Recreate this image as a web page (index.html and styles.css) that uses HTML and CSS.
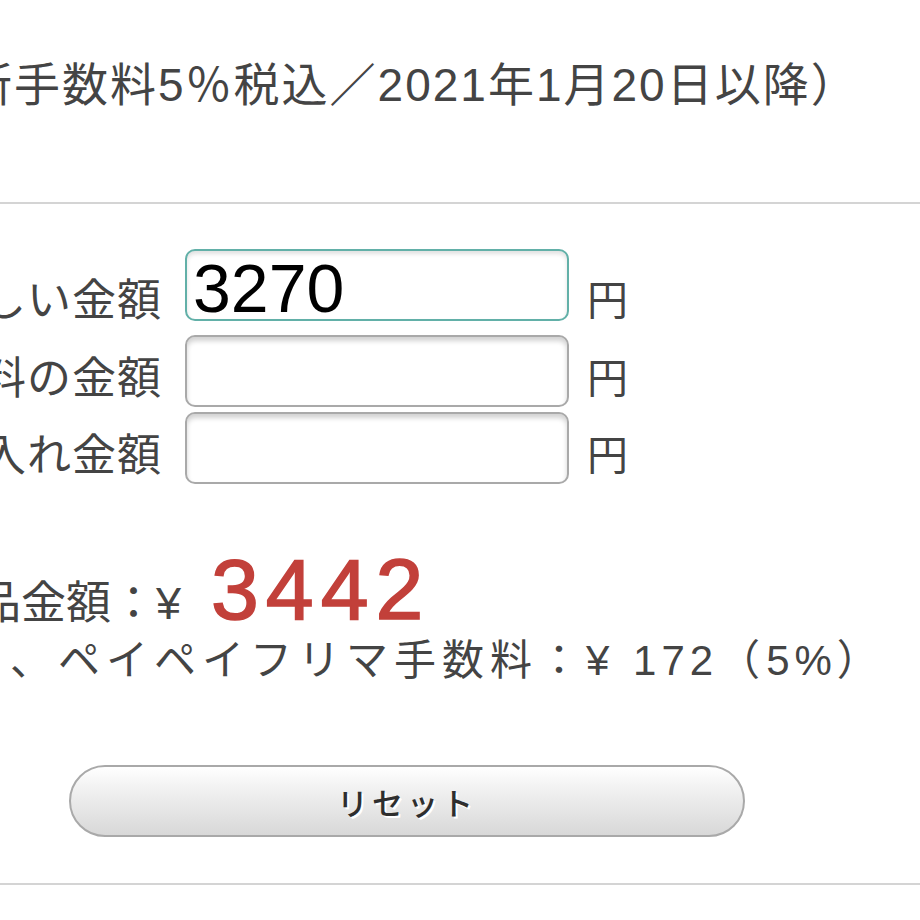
FILE: index.html
```html
<!DOCTYPE html>
<html lang="ja">
<head>
<meta charset="UTF-8">
<meta name="viewport" content="width=device-width, initial-scale=1.0">
<link rel="stylesheet" href="styles.css">
<title>出品金額計算</title>
</head>
<body>
<div class="page">
<p class="lead">（新手数料5％税込／2021年1月20日以降）</p>
<hr class="rule">
<form class="calc">
<div class="row row-first">
<label class="label" for="want"><span>欲しい金額</span></label>
<input class="field is-focus" id="want" type="text" value="3270">
<span class="unit">円</span>
</div>
<div class="row row-second">
<label class="label" for="fee"><span>手数料の金額</span></label>
<input class="field" id="fee" type="text">
<span class="unit">円</span>
</div>
<div class="row row-third">
<label class="label" for="cost"><span>仕入れ金額</span></label>
<input class="field" id="cost" type="text">
<span class="unit">円</span>
</div>
</form>
<div class="result">
<p class="price"><span class="price-label">出品金額：¥</span><span class="price-num">3442</span></p>
<p class="fee">（うち、ペイペイフリマ手数料：¥ <span class="num">172</span>（<span class="num">5%</span>）</p>
</div>
<div class="actions">
<button class="reset" type="button">リセット</button>
</div>
<hr class="rule">
</div>
</body>
</html>
```
FILE: styles.css
```css
html,
body {
margin: 0;
height: 100%;
background: #fff;
}
.page {
width: 920px;
height: 920px;
overflow: hidden;
color: #444;
font-family: "Liberation Sans", "Noto Sans CJK JP", sans-serif;
}
.lead {
margin: 0 0 0 -82px;
padding-top: 52px;
height: 150px;
font-size: 46px;
letter-spacing: 2px;
line-height: 66px;
white-space: nowrap;
}
.rule {
margin: 0;
border: 0;
height: 2px;
background: #d4d4d4;
}
.calc {
padding-top: 45px;
}
.row {
display: flex;
align-items: center;
height: 72px;
}
.row-second {
margin-top: 14px;
}
.row-third {
margin-top: 5px;
}
.label {
display: flex;
justify-content: flex-end;
width: 162px;
margin-right: 23px;
font-size: 44px;
letter-spacing: 1px;
line-height: 50px;
white-space: nowrap;
}
.unit {
margin-left: 18px;
font-size: 41px;
line-height: 50px;
}
.row-first .label,
.row-first .unit {
margin-top: 32px;
}
.row-second .label,
.row-second .unit,
.row-third .label,
.row-third .unit {
margin-top: 15px;
}
.field {
box-sizing: border-box;
width: 384px;
height: 72px;
margin: 0;
padding: 6px 0 0 6px;
border: 2px solid #a9a9a9;
border-radius: 10px;
background: #fff;
box-shadow: inset 0 4px 5px rgba(0, 0, 0, 0.18);
color: #000;
font-family: "Liberation Sans", sans-serif;
font-size: 68px;
line-height: 66px;
outline: none;
-webkit-appearance: none;
}
.is-focus {
border-color: #62b0a8;
box-shadow: inset 0 3px 4px rgba(0, 0, 0, 0.12);
}
.result {
padding-top: 62px;
}
.price {
display: flex;
align-items: baseline;
margin: 0 0 0 -69px;
white-space: nowrap;
}
.price-label {
font-size: 45px;
}
.price-num {
margin-left: 30px;
color: #c2403a;
font-size: 86px;
letter-spacing: 7px;
line-height: 86px;
-webkit-text-stroke: 1.6px #c2403a;
}
.fee {
margin: 0 0 0 -134px;
font-size: 42px;
letter-spacing: 6px;
line-height: 58px;
white-space: nowrap;
}
.num {
letter-spacing: 5px;
}
.actions {
padding: 75px 0 46px 69px;
}
.reset {
box-sizing: border-box;
width: 676px;
height: 72px;
border: 2px solid #a9a9a9;
border-radius: 36px;
background: linear-gradient(to bottom, #fff 0%, #f2f2f2 30%, #d8d8d8 100%);
color: #2e2e2e;
font-family: "Noto Sans CJK JP", sans-serif;
font-size: 31px;
font-weight: 500;
letter-spacing: 4px;
text-shadow: 2px 2px 0 #fff;
cursor: pointer;
}
```
